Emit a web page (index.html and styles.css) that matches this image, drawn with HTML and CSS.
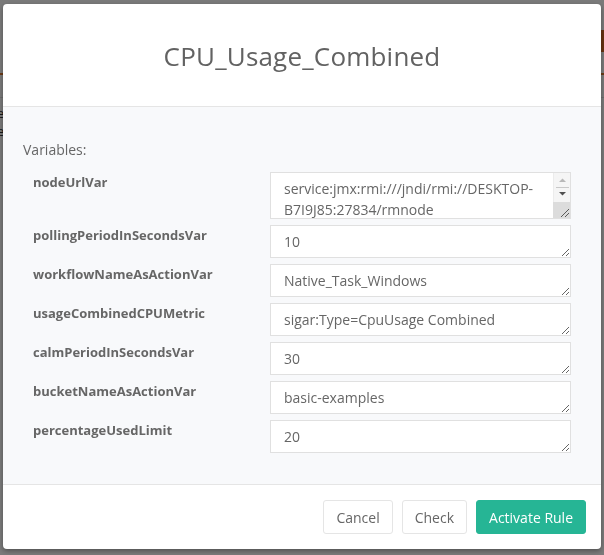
FILE: index.html
```html
<!DOCTYPE html>
<html>
<head>
<meta charset="utf-8">
<link rel="stylesheet" href="styles.css">
</head>
<body>
<div class="page">
  <div class="navbar"><span class="nav-badge"></span></div>
  <div class="page-lines">
    <div class="page-line">e</div>
    <div class="page-line">e</div>
  </div>
</div>
<div class="overlay">
  <div class="modal">
    <div class="modal-header">
      <h2 class="modal-title">CPU_Usage_Combined</h2>
    </div>
    <div class="modal-body">
      <div class="section-title">Variables:</div>
      <div class="vars">
        <label class="var-label">nodeUrlVar</label>
        <div class="field-wrap">
          <textarea class="var-input tall" rows="2">service:jmx:rmi:///jndi/rmi://DESKTOP-B7I9J85:27834/rmnode</textarea>
          <div class="fake-scrollbar">
            <svg class="sb-arrow" width="17" height="14" viewBox="0 0 17 14"><polygon points="5,9 12,9 8.5,5.5" fill="#b8b8b8"/></svg>
            <div class="sb-sep"></div>
            <svg class="sb-arrow" width="17" height="14" viewBox="0 0 17 14"><polygon points="5,4 12,4 8.5,7.5" fill="#505050"/></svg>
          </div>
          <div class="fake-corner">
            <svg width="17" height="16" viewBox="0 0 17 16"><path d="M8 15 L16 7 M12 15 L16 11" stroke="#5a5a5a" stroke-width="1"/></svg>
          </div>
        </div>
        <label class="var-label">pollingPeriodInSecondsVar</label>
        <textarea class="var-input" rows="1">10</textarea>
        <label class="var-label">workflowNameAsActionVar</label>
        <textarea class="var-input" rows="1">Native_Task_Windows</textarea>
        <label class="var-label">usageCombinedCPUMetric</label>
        <textarea class="var-input" rows="1">sigar:Type=CpuUsage Combined</textarea>
        <label class="var-label">calmPeriodInSecondsVar</label>
        <textarea class="var-input" rows="1">30</textarea>
        <label class="var-label">bucketNameAsActionVar</label>
        <textarea class="var-input" rows="1">basic-examples</textarea>
        <label class="var-label">percentageUsedLimit</label>
        <textarea class="var-input" rows="1">20</textarea>
      </div>
    </div>
    <div class="modal-footer">
      <button class="btn">Cancel</button>
      <button class="btn">Check</button>
      <button class="btn btn-primary">Activate Rule</button>
    </div>
  </div>
</div>
</body>
</html>
```

FILE: styles.css
```css
* { box-sizing: border-box; }
html, body { margin: 0; padding: 0; }
body {
  font-family: "Open Sans", "Liberation Sans", sans-serif;
  background: #ffffff;
  width: 604px;
  height: 555px;
  overflow: hidden;
}
.page { height: 555px; }
.navbar {
  height: 75px;
  border-bottom: 2px solid #e07a30;
  position: relative;
}
.nav-badge {
  position: absolute;
  right: 0;
  top: 30px;
  width: 6px;
  height: 22px;
  background: #d86a22;
}
.page-lines {
  margin-top: 22px;
  border-top: 1px solid #e2e2e2;
  padding-top: 6px;
}
.page-line {
  font-size: 13px;
  line-height: 18px;
  color: #333;
  margin-left: -3px;
  width: 10px;
}
.overlay {
  position: fixed;
  inset: 0;
  background: rgba(0, 0, 0, 0.52);
  padding: 4px 3px 6px 3px;
}
.modal {
  width: 598px;
  height: 545px;
  background: #fff;
  border-radius: 4px;
  box-shadow: 0 2px 5px rgba(0, 0, 0, 0.35);
  display: flex;
  flex-direction: column;
  overflow: hidden;
}
.modal-header {
  height: 103px;
  border-bottom: 1px solid #e5e5e5;
  display: flex;
  align-items: center;
  justify-content: center;
}
.modal-title {
  margin: 0;
  font-size: 26px;
  font-weight: 500;
  color: #626262;
  line-height: 34px;
  padding-top: 2px;
  letter-spacing: 0.2px;
}
.modal-body {
  flex: 1;
  background: #f8f9fb;
  padding: 33px 30px 31px 20px;
}
.section-title {
  font-size: 14px;
  line-height: 20px;
  color: #666;
  margin-bottom: 12px;
}
.vars {
  display: grid;
  grid-template-columns: 1fr 301px;
  row-gap: 6px;
  padding-left: 10px;
}
.var-label {
  font-size: 13px;
  font-weight: 700;
  color: #666;
  line-height: 20px;
}
.var-input {
  display: block;
  width: 301px;
  height: 33px;
  margin: 0;
  border: 1px solid #e0e0e0;
  border-radius: 0;
  background: #fff;
  font-family: "Open Sans", "Liberation Sans", sans-serif;
  font-size: 14px;
  line-height: 21px;
  color: #666;
  padding: 5px 13px;
  overflow: hidden;
}
.field-wrap {
  position: relative;
  width: 301px;
  height: 47px;
}
.var-input.tall {
  height: 47px;
  padding-right: 30px;
}
.fake-scrollbar {
  position: absolute;
  top: 1px;
  right: 1px;
  width: 17px;
  height: 29px;
  background: #f5f5f5;
  border-left: 1px solid #ececec;
  display: flex;
  flex-direction: column;
  align-items: center;
}
.sb-arrow { display: block; flex: none; }
.sb-sep {
  width: 13px;
  height: 1px;
  background: #c8c8c8;
  flex: none;
}
.fake-corner {
  position: absolute;
  right: 1px;
  bottom: 1px;
  width: 17px;
  height: 16px;
  background: #dcdcdc;
}
.fake-corner svg { display: block; }
.modal-footer {
  border-top: 1px solid #e5e5e5;
  padding: 15px 15px;
  display: flex;
  justify-content: flex-end;
  gap: 9px;
}
.btn {
  height: 34px;
  font-family: "Open Sans", "Liberation Sans", sans-serif;
  font-size: 14px;
  color: #666;
  background: #fff;
  border: 1px solid #e5e5e5;
  border-radius: 3px;
  padding: 0 12px;
}
.btn-primary {
  background: #26b595;
  border-color: #26b595;
  color: #fff;
}
```
